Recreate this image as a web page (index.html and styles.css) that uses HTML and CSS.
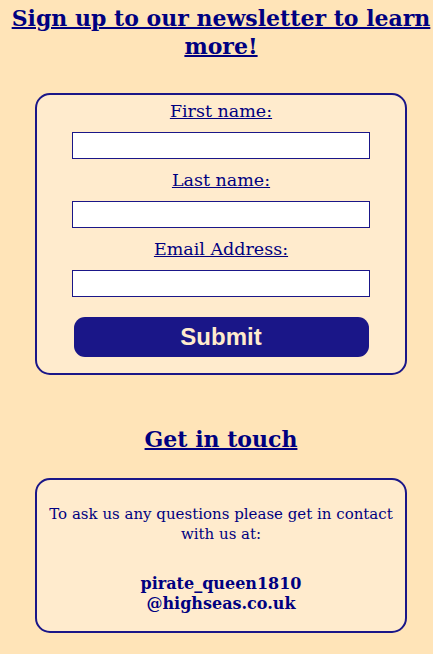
FILE: index.html
```html
<!DOCTYPE html>
<html lang="en">
<head>
<meta charset="utf-8">
<title>Newsletter</title>
<link rel="stylesheet" href="styles.css">
</head>
<body>
<main class="page">
  <h2 class="title"><a href="#">Sign up to our newsletter to learn more!</a></h2>
  <form class="card form-card">
    <label class="label" for="fn">First name:</label>
    <input class="field" id="fn" type="text">
    <label class="label" for="ln">Last name:</label>
    <input class="field" id="ln" type="text">
    <label class="label" for="em">Email Address:</label>
    <input class="field" id="em" type="email">
    <button class="submit" type="button">Submit</button>
  </form>
  <h2 class="title contact-title"><a href="#">Get in touch</a></h2>
  <section class="card contact-card">
    <p class="contact-text">To ask us any questions please get in contact with us at:</p>
    <p class="contact-email">pirate_queen1810<br>@highseas.co.uk</p>
  </section>
</main>
</body>
</html>
```
FILE: styles.css
```css
html, body {
  margin: 0;
  padding: 0;
  background: #ffe4b8;
}
body {
  font-family: "DejaVu Serif", "Liberation Serif", serif;
  color: #000080;
}
.page {
  display: flex;
  flex-direction: column;
  align-items: center;
  padding: 0 26px 0 35px;
}
.title {
  margin: 4px 0 0;
  text-align: center;
  font-size: 22px;
  line-height: 28px;
  font-weight: bold;
  width: 420px;
}
.title a {
  color: #000080;
  text-decoration: underline;
  text-decoration-thickness: 2px;
}
.card {
  box-sizing: border-box;
  width: 372px;
  background: #ffebcd;
  border: 2px solid #1a1688;
  border-radius: 15px;
}
.form-card {
  margin-top: 33px;
  display: flex;
  flex-direction: column;
  align-items: center;
  padding: 5px 0 16px;
}
.label {
  font-size: 17.5px;
  line-height: 22px;
  text-decoration: underline;
  color: #000080;
}
.field {
  box-sizing: border-box;
  width: 298px;
  height: 27px;
  margin: 10px 0;
  border: 1px solid #1a1688;
  background: #fff;
  padding: 0;
}
.submit {
  margin-top: 10px;
  width: 295px;
  height: 40px;
  border: none;
  border-radius: 11px;
  background: #1a1688;
  color: #ffebcd;
  font-family: "Liberation Sans", Arial, sans-serif;
  font-weight: bold;
  font-size: 24px;
}
.contact-title {
  margin-top: 50px;
}
.contact-card {
  margin-top: 25px;
  padding: 24px 4px 17px;
  text-align: center;
}
.contact-text {
  margin: 0;
  font-size: 15px;
  line-height: 20px;
}
.contact-email {
  margin: 30px 0 0;
  font-size: 16px;
  line-height: 20px;
  font-weight: bold;
}
```
